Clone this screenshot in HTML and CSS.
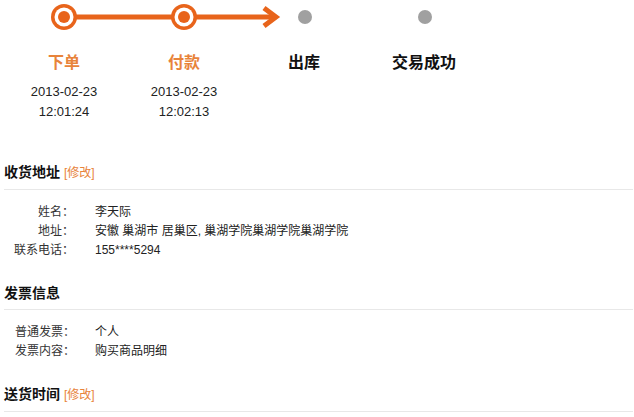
FILE: index.html
```html
<!DOCTYPE html>
<html lang="zh-CN">
<head>
  <meta charset="UTF-8" />
  <title>订单详情</title>
  <link rel="stylesheet" href="styles.css">
</head>
<body>
  <!-- Order progress -->
  <section class="progress">
    <svg class="track" width="480" height="34" viewBox="0 0 480 34">
      <line x1="64" y1="17" x2="184" y2="17" stroke="#e8641b" stroke-width="5" />
      <line x1="184" y1="17" x2="274" y2="17" stroke="#e8641b" stroke-width="5" />
      <polyline points="264,8 276,17 264,26" fill="none" stroke="#e8641b" stroke-width="5" stroke-linejoin="miter" />
      <circle cx="64" cy="17" r="13" fill="#e8641b" />
      <circle cx="64" cy="17" r="9.5" fill="#fff" />
      <circle cx="64" cy="17" r="6" fill="#e8641b" />
      <circle cx="184" cy="17" r="13" fill="#e8641b" />
      <circle cx="184" cy="17" r="9.5" fill="#fff" />
      <circle cx="184" cy="17" r="6" fill="#e8641b" />
      <circle cx="305" cy="17" r="7" fill="#a0a0a0" />
      <circle cx="425" cy="17" r="7" fill="#a0a0a0" />
    </svg>
    <div class="steps">
      <div class="step done">
        <div class="step-name">下单</div>
        <div class="step-time">2013-02-23<br>12:01:24</div>
      </div>
      <div class="step done">
        <div class="step-name">付款</div>
        <div class="step-time">2013-02-23<br>12:02:13</div>
      </div>
      <div class="step">
        <div class="step-name">出库</div>
      </div>
      <div class="step">
        <div class="step-name">交易成功</div>
      </div>
    </div>
  </section>

  <!-- Shipping address -->
  <section class="block">
    <h3 class="block-title">收货地址 <a href="#" class="edit">[修改]</a></h3>
    <div class="rows right">
      <div class="row"><span class="label">姓名：</span><span class="value">李天际</span></div>
      <div class="row"><span class="label">地址：</span><span class="value">安徽 巢湖市 居巢区, 巢湖学院巢湖学院巢湖学院</span></div>
      <div class="row"><span class="label">联系电话：</span><span class="value">155****5294</span></div>
    </div>
  </section>

  <!-- Invoice -->
  <section class="block">
    <h3 class="block-title">发票信息</h3>
    <div class="rows left">
      <div class="row"><span class="label">普通发票：</span><span class="value">个人</span></div>
      <div class="row"><span class="label">发票内容：</span><span class="value">购买商品明细</span></div>
    </div>
  </section>

  <!-- Delivery time -->
  <section class="block">
    <h3 class="block-title">送货时间 <a href="#" class="edit">[修改]</a></h3>
  </section>
</body>
</html>
```

FILE: styles.css
```css
* {
  margin: 0;
  padding: 0;
  box-sizing: border-box;
}
body {
  font-family: "Liberation Sans", "Noto Sans CJK SC", sans-serif;
  font-size: 12px;
  color: #333;
  background: #fff;
}
/* Progress */
.progress {
  height: 160px;
}
.track {
  display: block;
}
.steps {
  display: flex;
  padding-left: 4px;
  margin-top: 17px;
}
.step {
  width: 120px;
  text-align: center;
}
.step-name {
  font-size: 16px;
  font-weight: bold;
  line-height: 24px;
  color: #111;
}
.step.done .step-name {
  color: #e8833a;
}
.step-time {
  margin-top: 7px;
  font-size: 13px;
  line-height: 20px;
  color: #222;
}
/* Info blocks */
.block {
  margin-left: 4px;
  margin-right: 1px;
  margin-bottom: 23px;
}
.block-title {
  font-size: 14px;
  line-height: 24px;
  padding-bottom: 4px;
  color: #111;
  border-bottom: 1px solid #e8e8e8;
}
.edit {
  font-size: 12px;
  font-weight: normal;
  color: #e8833a;
  text-decoration: none;
}
.rows {
  padding-top: 11px;
}
.row {
  display: flex;
  align-items: baseline;
  height: 19px;
  line-height: 19px;
}
/* centred full-width colon, like the original font */
.label {
  width: 70px;
  flex-shrink: 0;
  white-space: nowrap;
  font-family: "Noto Sans CJK TC", "Noto Sans CJK SC", sans-serif;
}
.rows.right .label {
  text-align: right;
}
.rows.left .label {
  padding-left: 11px;
}
.value {
  margin-left: 21px;
  color: #222;
}
```
